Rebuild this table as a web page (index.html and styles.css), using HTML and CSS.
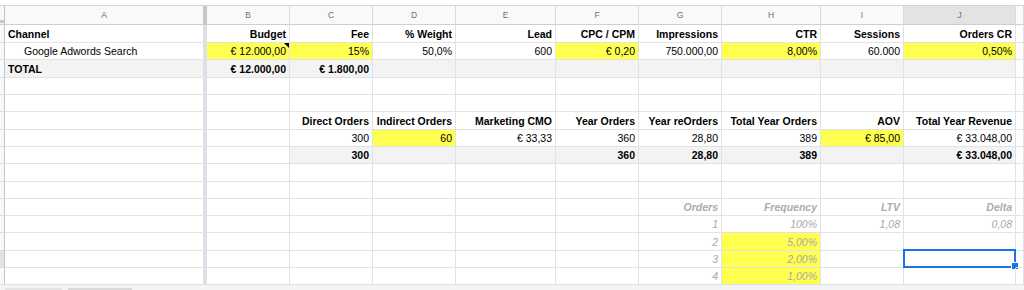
FILE: index.html
```html
<!DOCTYPE html>
<html>
<head>
<meta charset="utf-8">
<link rel="stylesheet" href="styles.css">
</head>
<body>
<div class="sheet">
  <div class="top"></div>
  <div class="r hd">
    <div class="rh corner"></div><div class="c">A</div><div class="fz"></div>
    <div class="c">B</div><div class="c">C</div><div class="c">D</div><div class="c">E</div><div class="c">F</div><div class="c">G</div><div class="c">H</div><div class="c">I</div><div class="c on">J</div><div class="c"></div>
  </div>

  <div class="r h18">
    <div class="rh"></div><div class="c l b">Channel</div><div class="fz"></div>
    <div class="c b">Budget</div><div class="c b">Fee</div><div class="c b">% Weight</div><div class="c b">Lead</div><div class="c b">CPC / CPM</div><div class="c b">Impressions</div><div class="c b">CTR</div><div class="c b">Sessions</div><div class="c b">Orders CR</div><div class="c"></div>
  </div>
  <div class="r h17">
    <div class="rh"></div><div class="c l ind">Google Adwords Search</div><div class="fz"></div>
    <div class="c y note">€ 12.000,00</div><div class="c y">15%</div><div class="c">50,0%</div><div class="c">600</div><div class="c y">€ 0,20</div><div class="c">750.000,00</div><div class="c y">8,00%</div><div class="c">60.000</div><div class="c y">0,50%</div><div class="c"></div>
  </div>
  <div class="r h18">
    <div class="rh"></div><div class="c l b g">TOTAL</div><div class="fz"></div>
    <div class="c b g">€ 12.000,00</div><div class="c b g">€ 1.800,00</div><div class="c g"></div><div class="c g"></div><div class="c g"></div><div class="c g"></div><div class="c g"></div><div class="c g"></div><div class="c g"></div><div class="c"></div>
  </div>
  <div class="r h17">
    <div class="rh"></div><div class="c"></div><div class="fz"></div>
    <div class="c"></div><div class="c"></div><div class="c"></div><div class="c"></div><div class="c"></div><div class="c"></div><div class="c"></div><div class="c"></div><div class="c"></div><div class="c"></div>
  </div>
  <div class="r h17">
    <div class="rh"></div><div class="c"></div><div class="fz"></div>
    <div class="c"></div><div class="c"></div><div class="c"></div><div class="c"></div><div class="c"></div><div class="c"></div><div class="c"></div><div class="c"></div><div class="c"></div><div class="c"></div>
  </div>
  <div class="r h18">
    <div class="rh"></div><div class="c"></div><div class="fz"></div>
    <div class="c"></div><div class="c b">Direct Orders</div><div class="c b">Indirect Orders</div><div class="c b">Marketing CMO</div><div class="c b">Year Orders</div><div class="c b">Year reOrders</div><div class="c b">Total Year Orders</div><div class="c b">AOV</div><div class="c b">Total Year Revenue</div><div class="c"></div>
  </div>
  <div class="r h17">
    <div class="rh"></div><div class="c"></div><div class="fz"></div>
    <div class="c"></div><div class="c">300</div><div class="c y">60</div><div class="c">€ 33,33</div><div class="c">360</div><div class="c">28,80</div><div class="c">389</div><div class="c y">€ 85,00</div><div class="c">€ 33.048,00</div><div class="c"></div>
  </div>
  <div class="r h17">
    <div class="rh"></div><div class="c"></div><div class="fz"></div>
    <div class="c"></div><div class="c b g">300</div><div class="c g"></div><div class="c g"></div><div class="c b g">360</div><div class="c b g">28,80</div><div class="c b g">389</div><div class="c g"></div><div class="c b g">€ 33.048,00</div><div class="c"></div>
  </div>
  <div class="r h18">
    <div class="rh"></div><div class="c"></div><div class="fz"></div>
    <div class="c"></div><div class="c"></div><div class="c"></div><div class="c"></div><div class="c"></div><div class="c"></div><div class="c"></div><div class="c"></div><div class="c"></div><div class="c"></div>
  </div>
  <div class="r h17">
    <div class="rh"></div><div class="c"></div><div class="fz"></div>
    <div class="c"></div><div class="c"></div><div class="c"></div><div class="c"></div><div class="c"></div><div class="c"></div><div class="c"></div><div class="c"></div><div class="c"></div><div class="c"></div>
  </div>
  <div class="r h17">
    <div class="rh"></div><div class="c"></div><div class="fz"></div>
    <div class="c"></div><div class="c"></div><div class="c"></div><div class="c"></div><div class="c"></div><div class="c ib">Orders</div><div class="c ib">Frequency</div><div class="c ib">LTV</div><div class="c ib">Delta</div><div class="c"></div>
  </div>
  <div class="r h17">
    <div class="rh"></div><div class="c"></div><div class="fz"></div>
    <div class="c"></div><div class="c"></div><div class="c"></div><div class="c"></div><div class="c"></div><div class="c i">1</div><div class="c i">100%</div><div class="c i">1,08</div><div class="c i">0,08</div><div class="c"></div>
  </div>
  <div class="r h18">
    <div class="rh"></div><div class="c"></div><div class="fz"></div>
    <div class="c"></div><div class="c"></div><div class="c"></div><div class="c"></div><div class="c"></div><div class="c i">2</div><div class="c i y">5,00%</div><div class="c"></div><div class="c"></div><div class="c"></div>
  </div>
  <div class="r h17">
    <div class="rh on"></div><div class="c"></div><div class="fz"></div>
    <div class="c"></div><div class="c"></div><div class="c"></div><div class="c"></div><div class="c"></div><div class="c i">3</div><div class="c i y">2,00%</div><div class="c"></div><div class="c sel"></div><div class="c"></div>
  </div>
  <div class="r h17">
    <div class="rh"></div><div class="c"></div><div class="fz"></div>
    <div class="c"></div><div class="c"></div><div class="c"></div><div class="c"></div><div class="c"></div><div class="c i">4</div><div class="c i y">1,00%</div><div class="c"></div><div class="c"></div><div class="c"></div>
  </div>

  <div class="foot">
    <div class="tab"></div>
    <div class="tab wide"></div>
  </div>
</div>
</body>
</html>
```

FILE: styles.css
```css
:root {
  --cols: 5px 198px 4px 83px 83px 83px 100px 83px 83px 99px 83px 112px 8px;
  --grid: #e2e2e2;
}

* {
  box-sizing: border-box;
}

body {
  margin: 0;
  background: #ffffff;
  font-family: "Liberation Sans", Arial, sans-serif;
  font-size: 10.5px;
  color: #000000;
}

.sheet {
  width: 1024px;
  height: 290px;
  overflow: hidden;
}

.top {
  height: 5px;
  background: #ffffff;
}

.r {
  display: grid;
  grid-template-columns: var(--cols);
}

.h17 {
  height: 17px;
}

.h18 {
  height: 18px;
}

.c {
  position: relative;
  display: flex;
  align-items: center;
  justify-content: flex-end;
  padding: 0 3px;
  white-space: nowrap;
  overflow: visible;
  border-right: 1px solid var(--grid);
  border-bottom: 1px solid var(--grid);
}

.r > .c:nth-child(2) {
  border-right: none;
}

.rh {
  background: #f8f9fa;
  border-right: 1px solid #c4c4c4;
  border-bottom: 1px solid #dcdcdc;
}

.rh.on {
  background: #e1e3e6;
}

.fz {
  background: #dce1e8;
}

/* column header row */
.hd {
  height: 20px;
  border-top: 1px solid #d4d4d4;
}

.hd .c {
  justify-content: center;
  background: #f8f9fa;
  color: #6f6f6f;
  font-family: "Liberation Sans", Arial, sans-serif;
  font-size: 8.5px;
  border-right-color: #dadada;
  border-bottom: 1px solid #cfcfcf;
}

.hd .c.on {
  background: #e3e3e3;
}

.hd .fz {
  background: #c6c6c6;
}

.hd .rh.corner {
  position: relative;
  border-bottom: 1px solid #cfcfcf;
}

.hd .rh.corner::after {
  content: "";
  position: absolute;
  left: 0;
  right: 0;
  bottom: 1px;
  height: 3px;
  background: #c6c6c6;
}

.l {
  justify-content: flex-start;
}

.ind {
  padding-left: 19px;
}

.b {
  font-weight: bold;
}

.g {
  background: #f3f3f3;
}

.y {
  background: #ffff50;
}

.i {
  font-style: italic;
  color: #a8a8a8;
}

.ib {
  font-style: italic;
  font-weight: bold;
  color: #acacac;
}

.note::after {
  content: "";
  position: absolute;
  top: 0;
  right: 0;
  width: 0;
  height: 0;
  border-top: 5px solid #000000;
  border-left: 5px solid transparent;
}

.sel::before {
  content: "";
  position: absolute;
  left: -1px;
  top: -2px;
  right: -1px;
  bottom: -1px;
  border: 2px solid #1a73e8;
}

.sel::after {
  content: "";
  position: absolute;
  right: -4px;
  bottom: -3px;
  width: 6px;
  height: 6px;
  background: #1a73e8;
  border: 1px solid #ffffff;
}

.foot {
  height: 5px;
  background: #f1f3f4;
  display: flex;
  gap: 6px;
  padding: 3px 0 0 5px;
}

.tab {
  width: 57px;
  height: 2px;
  background: #e3e3e3;
}

.tab.wide {
  width: 64px;
  background: #d9d9d9;
}
```
